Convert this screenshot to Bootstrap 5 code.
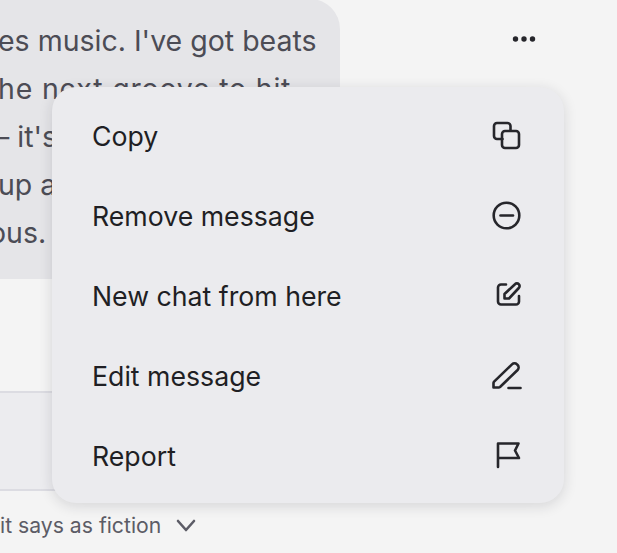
<!DOCTYPE html>
<html lang="en">
<head>
    <meta charset="UTF-8">
    <meta name="viewport" content="width=device-width, initial-scale=1.0">
    <title>Message menu</title>
    <link href="https://cdn.jsdelivr.net/npm/bootstrap@5.3.3/dist/css/bootstrap.min.css" rel="stylesheet">
    <style>
        html, body { height: 100%; }
        body { background: #f4f4f4; font-family: Inter, "Noto Sans", sans-serif; overflow: hidden; }
        .stage { width: 617px; height: 553px; overflow: hidden; }
        .bubble { width: 340px; height: 280px; margin-top: -1px; padding-top: 18px; background: #e5e5e8; border-bottom-right-radius: 30px; border-top-right-radius: 30px; color: #4c4c55; font-size: 28.5px; line-height: 48px; white-space: nowrap; }
        .bubble-text { margin-left: -2px; }
        .line-wide { letter-spacing: .8px; }
        .line-dash { margin-left: -5px; }
        .line-end { margin-left: -11px; }
        .more-btn { margin-left: 172px; margin-top: 33px; height: 12px; }
        .input-box { width: 500px; height: 100px; margin-top: 112px; background: #ececef; border-top: 2px solid #dcdce2; border-bottom: 2px solid #dcdce2; }
        .foot-line { height: 61px; padding-top: 19px; gap: 15px; color: #5c5c66; font-size: 21.2px; white-space: nowrap; }
        .msg-menu { position: absolute; left: 52px; top: 87px; width: 512px; height: 416px; padding: 9px 41px 9px 40px; background: #ebebee; border-radius: 24px; box-shadow: 0 3px 14px rgba(30, 30, 40, .14); color: #1f1f24; font-size: 26.7px; }
        .msg-menu .menu-row { height: 80px; }
        .ico { width: 32px; height: 32px; fill: none; stroke: #26262b; stroke-width: 2.6; stroke-linecap: round; stroke-linejoin: round; flex: none; }
    </style>
</head>
<body>
<div class="stage position-relative">
    <div class="d-flex align-items-start">
        <div class="bubble">
            <div class="bubble-text">es music. I've got beats</div>
            <div class="bubble-text line-wide">he next groove to hit</div>
            <div class="bubble-text line-dash">– it's</div>
            <div class="bubble-text">up a</div>
            <div class="bubble-text line-end">ous.</div>
        </div>
        <svg class="more-btn" width="24" viewBox="0 0 24 12"><circle cx="3.5" cy="6" r="2.7" fill="#26262b"/><circle cx="12" cy="6" r="2.7" fill="#26262b"/><circle cx="20.5" cy="6" r="2.7" fill="#26262b"/></svg>
    </div>

    <div class="input-box"></div>

    <div class="foot-line d-flex align-items-start">
        <span class="foot-text">it says as fiction</span>
        <svg width="20" height="16" class="mt-2" viewBox="0 0 20 16" fill="none" stroke="#5c5c66" stroke-width="2.6" stroke-linecap="round" stroke-linejoin="round"><path d="M2 3l8 9 8-9"/></svg>
    </div>

    <div class="msg-menu">
        <div class="menu-row d-flex align-items-center justify-content-between">
            <span>Copy</span>
            <svg class="ico" viewBox="0 0 32 32"><path d="M19.5 10V6a3 3 0 0 0-3-3H6a3 3 0 0 0-3 3v10a3 3 0 0 0 3 3h5.5"/><rect x="11" y="11" width="17" height="17" rx="3"/></svg>
        </div>
        <div class="menu-row d-flex align-items-center justify-content-between">
            <span>Remove message</span>
            <svg class="ico" viewBox="0 0 32 32"><circle cx="15.5" cy="15.5" r="12.8"/><path d="M9.5 15.5h12.5"/></svg>
        </div>
        <div class="menu-row d-flex align-items-center justify-content-between">
            <span>New chat from here</span>
            <svg class="ico" viewBox="0 0 32 32"><path d="M15 4.5H10a3 3 0 0 0-3 3V21.5a3 3 0 0 0 3 3H25a3 3 0 0 0 3-3V16"/><path d="M13.5 18.5V14L24 4.2a2.6 2.6 0 0 1 3.8 0 2.6 2.6 0 0 1 0 3.8L18 18.5z"/></svg>
        </div>
        <div class="menu-row d-flex align-items-center justify-content-between">
            <span>Edit message</span>
            <svg class="ico" viewBox="0 0 32 32"><path d="M2.5 27.5V23a2 2 0 0 1 .6-1.4L21 4.4a3.6 3.6 0 0 1 5 0l.6.6a3.6 3.6 0 0 1 0 5L9 27a2 2 0 0 1-1.4.5z"/><path d="M17.5 28H29.5"/></svg>
        </div>
        <div class="menu-row d-flex align-items-center justify-content-between">
            <span>Report</span>
            <svg class="ico" viewBox="0 0 32 32"><path d="M7 27V3.5H27.5L24 10.5 28 18H7"/></svg>
        </div>
    </div>
</div>
<script src="https://cdn.jsdelivr.net/npm/bootstrap@5.3.3/dist/js/bootstrap.bundle.min.js"></script>
</body>
</html>
